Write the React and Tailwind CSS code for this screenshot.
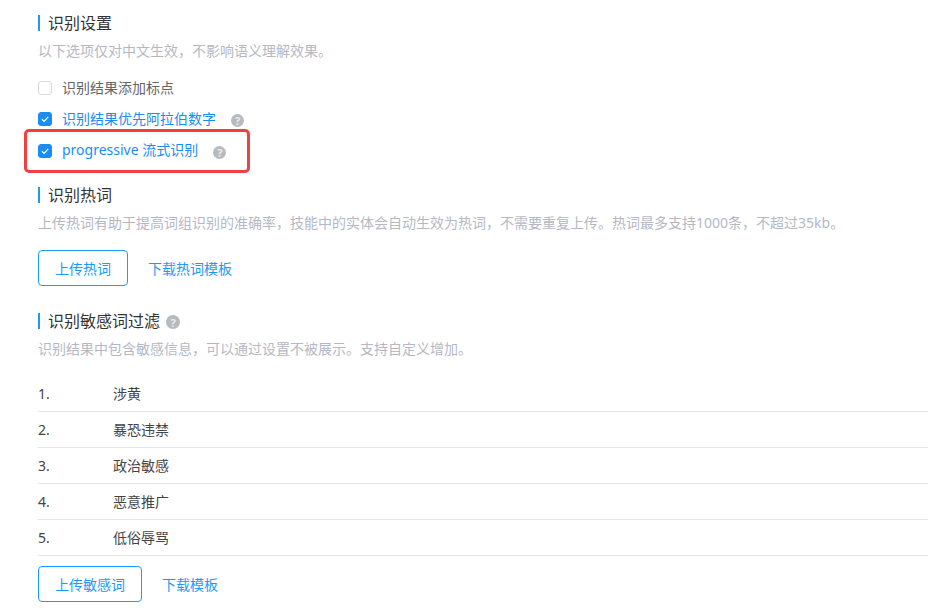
import React from 'react';

const FONT = { fontFamily: '"Noto Sans", "Noto Sans CJK SC", sans-serif' };

const Help = ({ className = '' }) => (
  <span className={`flex shrink-0 items-center justify-center rounded-full bg-[#b8bac1] text-[11px] font-bold leading-none text-[#e9eaed] ${className}`}>?</span>
);

const Title = ({ children, help }) => (
  <div className="flex h-4 items-center border-l-2 border-[#1a9bfc] pl-2 text-base leading-4 text-[#333]">
    {children}
    {help && <Help className="mt-[2px] ml-[6px] h-[14px] w-[14px]" />}
  </div>
);

const Desc = ({ children }) => (
  <p className="text-sm leading-5 whitespace-nowrap text-[#b5b8c4]">{children}</p>
);

const Check = ({ checked, children, helpClass, boxClass = '' }) => (
  <div className={`flex h-[22px] items-center text-sm ${checked ? 'text-[#1b8cf0]' : 'text-[#666]'}`}>
    <span className={`flex h-[14px] w-[14px] items-center justify-center rounded-[3px] border ${checked ? 'border-[#1b8cf0] bg-[#1b8cf0]' : 'border-[#d8d9e0] bg-white'} ${boxClass}`}>
      {checked && (
        <svg width="10" height="10" viewBox="0 0 10 10" fill="none">
          <path d="M1.8 5.1 L4.1 7.3 L8.2 2.9" stroke="#fff" strokeWidth="1.2" />
        </svg>
      )}
    </span>
    <span className="ml-[10px]">{children}</span>
    {helpClass && <Help className={`h-[13px] w-[13px] ${helpClass}`} />}
  </div>
);

const Button = ({ children, width }) => (
  <div className={`flex h-9 items-center justify-center rounded-[4px] border border-[#1a9bfc] pt-px text-sm text-[#1a9bfc] ${width}`}>{children}</div>
);

const rows = ['涉黄', '暴恐违禁', '政治敏感', '恶意推广', '低俗辱骂'];

export default function App() {
  return (
    <div className="relative h-[613px] w-[928px] overflow-hidden bg-white pl-[38px] pt-[15px]" style={FONT}>
      <Title>识别设置</Title>
      <div className="mt-[10px]"><Desc>以下选项仅对中文生效，不影响语义理解效果。</Desc></div>

      <div className="mt-[16px] flex flex-col gap-[9px]">
        <Check>识别结果添加标点</Check>
        <Check checked helpClass="mt-[2px] ml-[15px]">识别结果优先阿拉伯数字</Check>
        <Check checked helpClass="mt-[4px] ml-[15px]" boxClass="mt-[2px]">progressive 流式识别</Check>
      </div>

      {/* red highlight round the third option */}
      <div className="pointer-events-none absolute left-[24px] top-[129px] h-[44px] w-[226px] rounded-[5px] border-[3px] border-[#f04142]" />

      <div className="mt-[26px]"><Title>识别热词</Title></div>
      <div className="mt-[10px]"><Desc>上传热词有助于提高词组识别的准确率，技能中的实体会自动生效为热词，不需要重复上传。热词最多支持1000条，不超过35kb。</Desc></div>

      <div className="mt-[17px] flex items-center">
        <Button width="w-[90px]">上传热词</Button>
        <span className="ml-[20px] pt-px text-sm text-[#1a9bfc]">下载热词模板</span>
      </div>

      <div className="mt-[27px]"><Title help>识别敏感词过滤</Title></div>
      <div className="mt-[10px]"><Desc>识别结果中包含敏感信息，可以通过设置不被展示。支持自定义增加。</Desc></div>

      <div className="mt-[17px]">
        {rows.map((r, i) => (
          <div key={r} className="flex h-9 items-center border-b border-[#e4e5e8] pt-px text-sm text-[#444]">
            <span className="w-[75px]">{i + 1}.</span>
            <span>{r}</span>
          </div>
        ))}
      </div>

      <div className="mt-[10px] flex items-center">
        <Button width="w-[104px]">上传敏感词</Button>
        <span className="ml-[20px] pt-px text-sm text-[#1a9bfc]">下载模板</span>
      </div>
    </div>
  );
}
